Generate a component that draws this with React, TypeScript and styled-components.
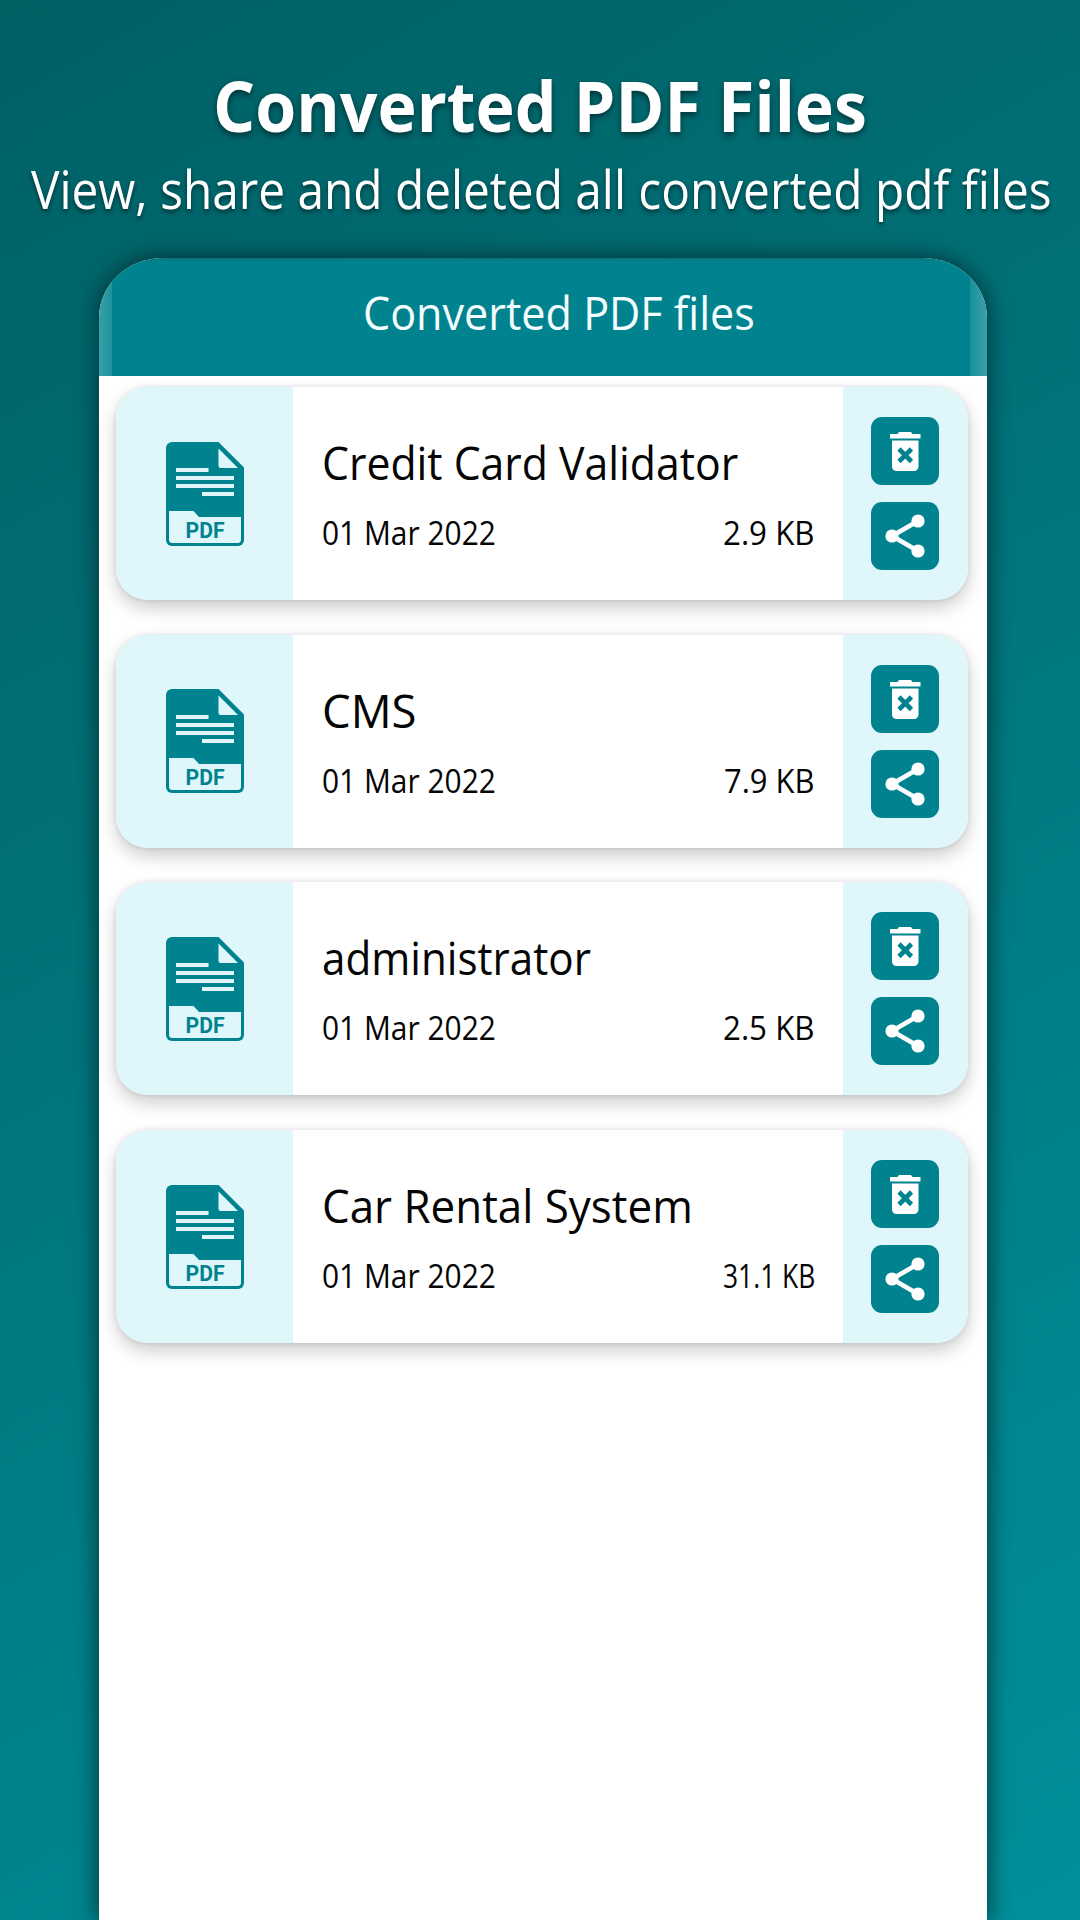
import React, { useLayoutEffect, useRef, useState } from "react";
import styled, { createGlobalStyle } from "styled-components";

const TEAL = "#00838f";
const PALE = "#dff7fa";

const Global = createGlobalStyle`
  *, *::before, *::after { box-sizing: border-box; }
  html, body { margin: 0; padding: 0; }
  body { font-family: "Open Sans", "Noto Sans", sans-serif; }
`;

const Page = styled.main`
  width: 1080px;
  height: 1920px;
  overflow: hidden;
  display: flex;
  flex-direction: column;
  background: linear-gradient(150deg, #006064 0%, #00909a 100%);
`;

const Hero = styled.header`
  flex: none;
  height: 258px;
  padding-top: 65px;
  display: flex;
  flex-direction: column;
  align-items: center;
  color: #fff;
`;

const Title = styled.h1`
  margin: 0;
  height: 80px;
  font-size: 69px;
  line-height: 80px;
  font-weight: 700;
  text-shadow: 0 3px 6px rgba(0, 20, 24, 0.65);
`;

const Subtitle = styled.p`
  margin: 9px 0 0 2px;
  height: 70px;
  font-size: 53px;
  line-height: 70px;
  text-shadow: 0 3px 5px rgba(0, 20, 24, 0.6);
`;

const Phone = styled.section`
  flex: 1;
  width: 888px;
  margin-left: 99px;
  display: flex;
  flex-direction: column;
  background: #fff;
  border-radius: 64px 64px 0 0 / 60px 60px 0 0;
  box-shadow: 0 0 22px 2px rgba(4, 40, 46, 0.8);
`;

const AppBar = styled.div`
  flex: none;
  height: 118px;
  padding: 25px 0 0 264px;
  color: #f4fdff;
  border-radius: inherit;
  font-size: 45px;
  line-height: 60px;
  background:
    linear-gradient(to bottom, rgba(20, 100, 105, 0.6), transparent) 0 0 / 100% 4px no-repeat,
    linear-gradient(to right, #35a0a9, #1e929d) 0 0 / 13px 100% no-repeat,
    linear-gradient(to left, #3aa0a9, #1a909b) 100% 0 / 17px 100% no-repeat,
    ${TEAL};
`;

const List = styled.ul`
  margin: 0;
  padding: 11px 19px 0 17px;
  list-style: none;
  display: flex;
  flex-direction: column;
  gap: 34.700px;
`;

const Card = styled.li`
  height: 213px;
  display: grid;
  grid-template-columns: 177px 1fr 125px;
  border-radius: 32px;
  background: #fff;
  box-shadow: 0 8px 18px rgba(0, 0, 0, 0.2), 0 0 5px rgba(0, 0, 0, 0.1);
`;

const IconPanel = styled.div`
  display: flex;
  align-items: center;
  justify-content: center;
  background: ${PALE};
  border-radius: 32px 0 0 32px;
`;

const Actions = styled.div`
  display: flex;
  flex-direction: column;
  align-items: center;
  justify-content: center;
  gap: 17px;
  padding-right: 1px;
  background: ${PALE};
  border-radius: 0 32px 32px 0;
`;

const Action = styled.button`
  width: 68px;
  height: 68px;
  padding: 0;
  border: 0;
  border-radius: 11px;
  background: ${TEAL};
  display: flex;
`;

const Details = styled.div`
  padding: 46px 28px 0 29px;
  color: #050505;
`;

const Name = styled.div`
  height: 60px;
  font-size: 45px;
  line-height: 60px;
`;

const Meta = styled.div`
  margin-top: 18px;
  display: flex;
  justify-content: space-between;
  font-size: 33px;
  line-height: 44px;
`;

const FitBox = styled.span<{ $width: number }>`
  display: block;
  width: ${(p) => p.$width}px;
  white-space: nowrap;
`;

const FitInner = styled.span`
  display: inline-block;
  transform-origin: 0 50%;
`;

function Fit({ width, children }: { width: number; children: string }) {
  const ref = useRef<HTMLSpanElement>(null);
  const [scale, setScale] = useState(1);
  useLayoutEffect(() => {
    if (ref.current) setScale(width / ref.current.offsetWidth);
  }, [width, children]);
  return (
    <FitBox $width={width}>
      <FitInner ref={ref} style={{ transform: `scaleX(${scale})` }}>
        {children}
      </FitInner>
    </FitBox>
  );
}

const PdfIcon = () => (
  <svg width="78" height="104" viewBox="0 0 78 104">
    <path d="M6 0H52.5L78 25.5V98a6 6 0 0 1-6 6H6a6 6 0 0 1-6-6V6a6 6 0 0 1 6-6Z" fill={TEAL} />
    <path d="M52.5 6.5 72 26H55a2.5 2.5 0 0 1-2.500-2.500Z" fill={PALE} />
    <path d="M10 26h32.500v4H10ZM10 34h58v4H10ZM10 42h58v4H10ZM36 50h32v4H36Z" fill={PALE} />
    <path d="M3 69h24.500l5.500 6h42v22.500a3.500 3.500 0 0 1-3.500 3.500h-65a3.500 3.500 0 0 1-3.500-3.500Z" fill={PALE} />
    <text x="19.500" y="96" fontFamily="Roboto, sans-serif" fontWeight="700" fontSize="22.500" textLength="39" lengthAdjust="spacingAndGlyphs" fill={TEAL}>
      PDF
    </text>
  </svg>
);

const TrashIcon = () => (
  <svg width="68" height="68" viewBox="0 0 68 68">
    <path d="M19 17h7.500l1.500-2h12l1.500 2H49.500V21.500H19Z" fill="#fff" />
    <path d="M21 23.500h26.500v26a4.500 4.500 0 0 1-4.500 4.500h-17.500a4.500 4.500 0 0 1-4.500-4.500Z" fill="#fff" />
    <path d="m28 32 12.500 12.500m0-12.500-12.500 12.500" stroke={TEAL} strokeWidth="4.600" />
  </svg>
);

const ShareIcon = () => (
  <svg width="68" height="68" viewBox="0 0 68 68">
    <path d="M47 19 21 34l26 15" fill="none" stroke="#fff" strokeWidth="4.600" />
    <g fill="#fff">
      <circle cx="47" cy="19" r="6.600" />
      <circle cx="21" cy="34" r="6.600" />
      <circle cx="47" cy="49" r="6.600" />
    </g>
  </svg>
);

const files = [
  { name: "Credit Card Validator", nameWidth: 416, size: "2.9 KB", sizeWidth: 92 },
  { name: "CMS", nameWidth: 95, size: "7.9 KB", sizeWidth: 91 },
  { name: "administrator", nameWidth: 269, size: "2.5 KB", sizeWidth: 92 },
  { name: "Car Rental System", nameWidth: 371, size: "31.1 KB", sizeWidth: 92 },
];

export default function App() {
  return (
    <Page>
      <Global />
      <Hero>
        <Title><Fit width={654}>Converted PDF Files</Fit></Title>
        <Subtitle><Fit width={1021}>View, share and deleted all converted pdf files</Fit></Subtitle>
      </Hero>
      <Phone>
        <AppBar><Fit width={392}>Converted PDF files</Fit></AppBar>
        <List>
          {files.map((f) => (
            <Card key={f.name}>
              <IconPanel><PdfIcon /></IconPanel>
              <Details>
                <Name><Fit width={f.nameWidth}>{f.name}</Fit></Name>
                <Meta>
                  <Fit width={174}>01 Mar 2022</Fit>
                  <Fit width={f.sizeWidth}>{f.size}</Fit>
                </Meta>
              </Details>
              <Actions>
                <Action aria-label="Delete"><TrashIcon /></Action>
                <Action aria-label="Share"><ShareIcon /></Action>
              </Actions>
            </Card>
          ))}
        </List>
      </Phone>
    </Page>
  );
}
